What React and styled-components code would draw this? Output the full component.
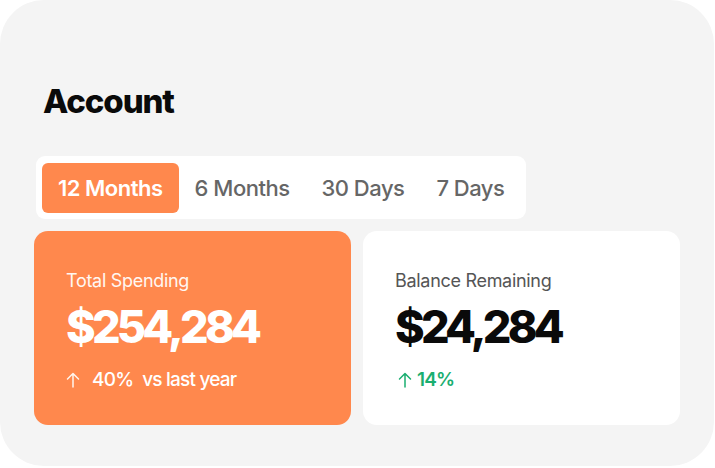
import React from "react";
import styled, { createGlobalStyle } from "styled-components";

const GlobalStyle = createGlobalStyle`
  body {
    margin: 0;
    background: #ffffff;
    font-family: Inter, "Noto Sans", sans-serif;
  }
`;

const periods = ["12 Months", "6 Months", "30 Days", "7 Days"];

const ArrowUp = ({ color }) => (
  <svg width="14" height="16" viewBox="0 0 14 16" fill="none">
    <path
      d="M7 15V1.5M1.5 7L7 1.5L12.5 7"
      stroke={color}
      strokeWidth="1.5"
      strokeLinecap="round"
      strokeLinejoin="round"
    />
  </svg>
);

const App = () => {
  return (
    <>
      <GlobalStyle />
      <Panel>
        <Title>Account</Title>
        <Tabs>
          {periods.map((p, i) => (
            <Tab key={p} $active={i === 0}>
              {p}
            </Tab>
          ))}
        </Tabs>
        <Cards>
          <StatCard $accent>
            <Label $accent>Total Spending</Label>
            <Amount $accent>$254,284</Amount>
            <Change $color="#ffffff">
              <ArrowUp color="#fff5ee" />
              <span>40%</span>
              <Note>vs last year</Note>
            </Change>
          </StatCard>
          <StatCard>
            <Label>Balance Remaining</Label>
            <Amount>$24,284</Amount>
            <Change $color="#1aae70" $tight>
              <ArrowUp color="#1aae70" />
              <span>14%</span>
            </Change>
          </StatCard>
        </Cards>
      </Panel>
    </>
  );
};

const Panel = styled.div`
  width: 714px;
  height: 466px;
  box-sizing: border-box;
  background: #f4f4f4;
  border-radius: 44px;
  padding: 82px 34px 0;
  display: flex;
  flex-direction: column;
`;

const Title = styled.h1`
  margin: 0 0 36px 9px;
  font-size: 33px;
  line-height: 38px;
  font-weight: 800;
  letter-spacing: -1.1px;
  color: #0a0a0a;
`;

const Tabs = styled.div`
  align-self: flex-start;
  margin-left: 2px;
  display: flex;
  padding: 7px 6px 6px;
  background: #ffffff;
  border-radius: 9px;
`;

const Tab = styled.div`
  height: 50px;
  display: flex;
  align-items: center;
  padding: 0 16px;
  border-radius: 6px;
  font-size: 22px;
  font-weight: ${(p) => (p.$active ? 600 : 500)};
  letter-spacing: -0.5px;
  color: ${(p) => (p.$active ? "#ffffff" : "#666666")};
  background: ${(p) => (p.$active ? "#ff884d" : "transparent")};
`;

const Cards = styled.div`
  margin-top: 12px;
  display: grid;
  grid-template-columns: 317px 317px;
  gap: 12px;
`;

const StatCard = styled.div`
  height: 194px;
  box-sizing: border-box;
  padding: 38px 32px 0;
  border-radius: 14px;
  background: ${(p) => (p.$accent ? "#ff884d" : "#ffffff")};
  display: flex;
  flex-direction: column;
`;

const Label = styled.div`
  font-size: 18px;
  line-height: 24px;
  font-weight: 400;
  letter-spacing: -0.3px;
  color: ${(p) => (p.$accent ? "#fff7f2" : "#555555")};
`;

const Amount = styled.div`
  margin-top: 8px;
  font-size: 45px;
  line-height: 52px;
  font-weight: 800;
  letter-spacing: -3.8px;
  color: ${(p) => (p.$accent ? "#ffffff" : "#0a0a0a")};
`;

const Change = styled.div`
  margin-top: 15px;
  padding-left: ${(p) => (p.$tight ? "3px" : "0")};
  display: flex;
  align-items: center;
  gap: ${(p) => (p.$tight ? "5px" : "12px")};
  font-size: 19px;
  line-height: 24px;
  font-weight: 500;
  letter-spacing: -0.8px;
  color: ${(p) => p.$color};
  ${(p) => p.$tight && "font-weight: 600;"}
`;

const Note = styled.span`
  margin-left: -3px;
`;

export default App;
